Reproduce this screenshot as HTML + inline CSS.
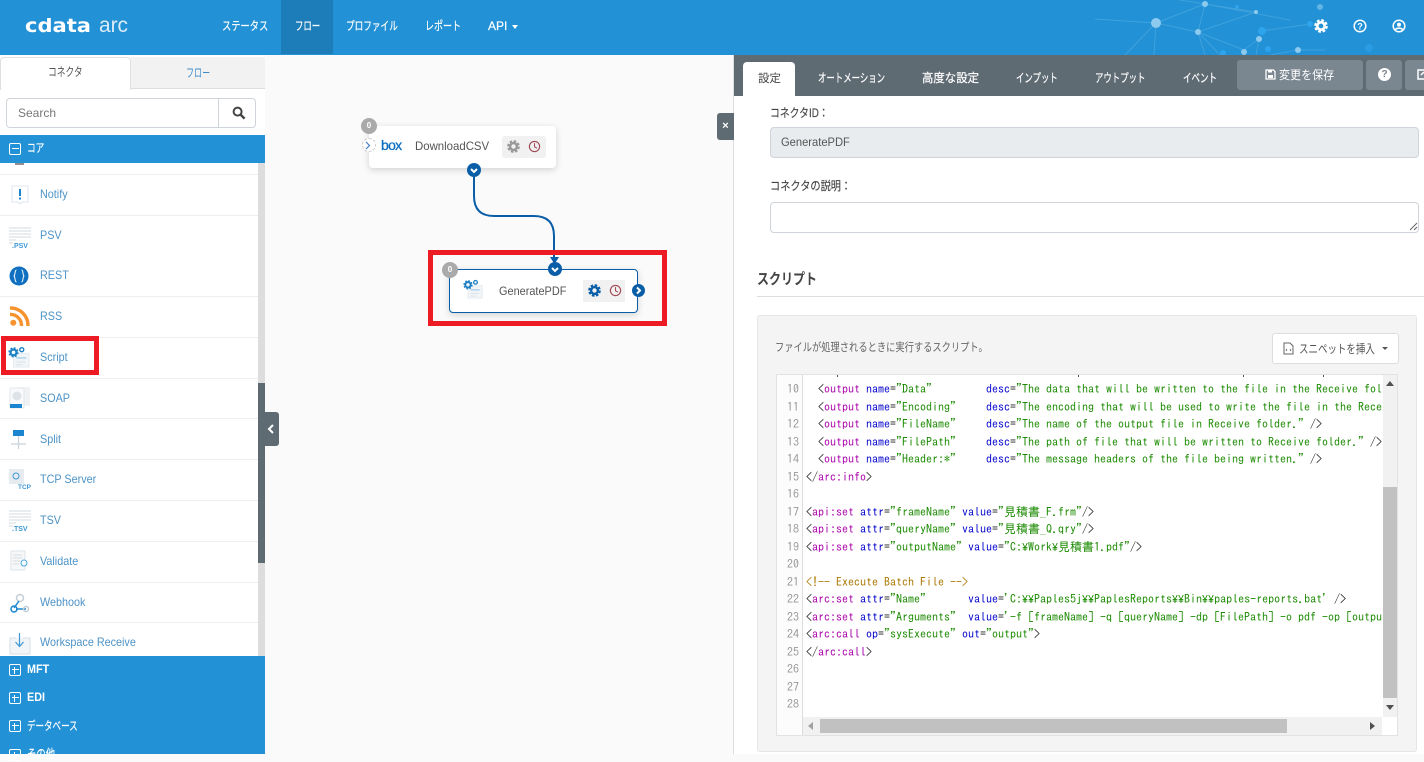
<!DOCTYPE html>
<html lang="ja"><head><meta charset="utf-8"><title>CData Arc</title>
<style>
*{box-sizing:border-box}
html,body{margin:0;padding:0;width:1424px;height:754px;overflow:hidden;background:#fafafa;font-family:"Liberation Sans","Noto Sans CJK JP",sans-serif;font-size:12px;color:#555}
.a{position:absolute}
.t{position:absolute;white-space:nowrap;line-height:16px;transform-origin:0 50%}
.nav{color:#fff;top:18px;-webkit-text-stroke:.2px #fff}
.row{position:absolute;left:0;width:258px;height:41px;border-bottom:1px solid #eee;background:#fff}
.row span{position:absolute;left:39.5px;top:11px;color:#4d93c6;font-size:12px;line-height:16px;white-space:nowrap;transform:scaleX(.9);transform-origin:0 50%}
.row svg{position:absolute;left:8px;top:5px}
.tab{color:#fff;top:70px;-webkit-text-stroke:.2px #fff}
.sec{color:#fff;left:27px;font-weight:bold}
.pm{position:absolute;left:9px;width:12px;height:12px;border:1.5px solid #fff;border-radius:2px}
.pm:before{content:"";position:absolute;left:1.5px;right:1.5px;top:3.75px;height:1.5px;background:#fff}
.pm.p:after{content:"";position:absolute;top:1.5px;bottom:1.5px;left:3.75px;width:1.5px;background:#fff}
.red{position:absolute;border:5px solid #ed1c24}
.node{position:absolute;background:#fff;border-radius:4px;box-shadow:0 2px 7px rgba(0,0,0,.16)}
.badge{position:absolute;width:16px;height:16px;border-radius:50%;background:#aaa;color:#fff;font-size:8px;line-height:16px;text-align:center;font-weight:bold}
.ib{position:absolute;background:#f1f1f1;height:22px;width:22px;top:10px}
pre{margin:0;font-family:"IPAGothic","Liberation Mono",monospace;font-size:12px;line-height:17.5px}
.k{color:#a0a}.b{color:#00c}.s{color:#1a8a00}.c{color:#a70}
.y{display:inline-block;font-family:"Liberation Mono",monospace;font-size:10px;line-height:0;transform:scaleY(1.2)}
.m{position:absolute;top:375px;width:1px;height:2px;background:#555}
</style></head><body>
<svg width="0" height="0" style="position:absolute"><defs>
<symbol id="gear" viewBox="0 0 16 16"><circle cx="8" cy="8" r="4.2" fill="none" stroke="currentColor" stroke-width="3"/><circle cx="8" cy="8" r="6.3" fill="none" stroke="currentColor" stroke-width="3" stroke-dasharray="3.1 1.85"/></symbol>
<symbol id="clock" viewBox="0 0 16 16"><circle cx="8" cy="8" r="6.3" fill="none" stroke="currentColor" stroke-width="1.4"/><path d="M8 3.8V8.4L11 10" fill="none" stroke="currentColor" stroke-width="1.3"/></symbol>
<symbol id="script" viewBox="0 0 24 24"><rect x="6" y="8" width="17" height="15" fill="#f1f5f8" stroke="#e4eaee"/><rect x="9" y="12" width="11" height="2" fill="#b9d8ec"/><rect x="9" y="17" width="10" height="1" fill="#d8e1e7"/><rect x="9" y="20" width="7" height="1" fill="#d8e1e7"/><circle cx="6" cy="7" r="3.2" fill="none" stroke="#1b7fc4" stroke-width="2.4"/><circle cx="6" cy="7" r="4.8" fill="none" stroke="#1b7fc4" stroke-width="1.6" stroke-dasharray="2 1.8"/><circle cx="15" cy="4" r="2.2" fill="none" stroke="#1b7fc4" stroke-width="1.5"/></symbol>
<symbol id="grid" viewBox="0 0 24 24"><g fill="#e9edf0"><rect x="1" y="1" width="22" height="2"/><rect x="1" y="4" width="22" height="2"/><rect x="1" y="7" width="22" height="2"/><rect x="1" y="10" width="22" height="2"/><rect x="1" y="13" width="7" height="2"/><rect x="1" y="16" width="4" height="2"/></g></symbol>
</defs></svg>

<!-- header -->
<div class="a" style="left:0;top:0;width:1424px;height:55px;background:#2291d6"></div>
<svg class="a" style="left:1090px;top:0" width="334" height="55" viewBox="1090 0 334 55">
<g stroke="#6fbce8" stroke-width="1" opacity=".38" fill="none"><path d="M1156 23L1205 4L1198 32ZM1205 4L1256 12L1198 32L1244 50M1198 32L1220 55M1198 32L1205 55M1156 23L1125 55M1156 23L1154 55M1156 23L1095 19M1205 4L1180 0M1205 4L1290 20M1262 31L1310 24M1259 39L1244 50M1259 39L1256 55M1298 50L1270 55M1298 50L1325 50"/></g>
<g fill="#8dcbee"><circle cx="1156" cy="23" r="5"/><circle cx="1205" cy="4" r="3"/><circle cx="1198" cy="32" r="3"/><circle cx="1256" cy="12" r="2"/><circle cx="1244" cy="52" r="3"/><circle cx="1259" cy="39" r="3"/><circle cx="1298" cy="50" r="3"/><circle cx="1320" cy="7" r="3" opacity=".6"/></g>
<g fill="#2ea4ec"><circle cx="1262" cy="31" r="4"/><circle cx="1268" cy="49" r="3"/><circle cx="1237" cy="7" r="2"/><circle cx="1223" cy="53" r="3"/><circle cx="1310" cy="24" r="3"/><circle cx="1369" cy="48" r="4" opacity=".6"/></g></svg>
<svg class="a" style="left:24px;top:12px" width="110" height="28"><text x="1" y="20" font-family="DejaVu Sans" font-weight="bold" font-size="19" fill="#fff" textLength="66" lengthAdjust="spacingAndGlyphs">cdata</text><text x="75" y="20" font-family="Liberation Sans" font-size="21" fill="#dcecf7" textLength="29" lengthAdjust="spacingAndGlyphs">arc</text></svg>
<div class="a" style="left:281px;top:0;width:52px;height:54px;background:#1d7db8"></div>
<div class="t nav" style="left:222px;transform:scaleX(.77)">ステータス</div>
<div class="t nav" style="left:295px;transform:scaleX(.7)">フロー</div>
<div class="t nav" style="left:346px;transform:scaleX(.72)">プロファイル</div>
<div class="t nav" style="left:425px;transform:scaleX(.75)">レポート</div>
<div class="t nav" style="left:488px">API</div>
<div class="a" style="left:512px;top:25px;border:3.5px solid transparent;border-top:4px solid #fff"></div>
<svg class="a" style="left:1314px;top:19px;color:#fff" width="14" height="14"><use href="#gear"/></svg>
<svg class="a" style="left:1353px;top:19px" width="14" height="14" viewBox="0 0 14 14"><circle cx="7" cy="7" r="5.8" fill="none" stroke="#fff" stroke-width="1.5"/><text x="7" y="10.3" text-anchor="middle" font-size="9" font-weight="bold" fill="#fff" font-family="Liberation Sans">?</text></svg>
<svg class="a" style="left:1392px;top:19px" width="14" height="14" viewBox="0 0 14 14"><circle cx="7" cy="7" r="5.8" fill="none" stroke="#fff" stroke-width="1.5"/><circle cx="7" cy="5.6" r="2" fill="#fff"/><path d="M3.4 10.8C4.4 8.6 9.6 8.6 10.6 10.8" fill="none" stroke="#fff" stroke-width="1.6"/></svg>

<!-- sidebar -->
<div class="a" style="left:0;top:55px;width:265px;height:699px;background:#fff"></div>
<div class="a" style="left:131px;top:57px;width:134px;height:32px;background:#f2f2f2;border-bottom:1px solid #ddd"></div>
<div class="a" style="left:0;top:57px;width:131px;height:33px;background:#fff;border:1px solid #e0e0e0;border-bottom:0;border-radius:4px 4px 0 0"></div>
<div class="t" style="left:48px;top:64px;color:#555;transform:scaleX(.73)">コネクタ</div>
<div class="t" style="left:186px;top:65px;color:#3f8bc9;transform:scaleX(.67)">フロー</div>
<div class="a" style="left:6px;top:98px;width:250px;height:30px;border:1px solid #ced4da;border-radius:4px;background:#fff"></div>
<div class="a" style="left:218px;top:98px;width:1px;height:30px;background:#ced4da"></div>
<div class="t" style="left:18px;top:105px;color:#777">Search</div>
<svg class="a" style="left:232px;top:106px" width="14" height="14" viewBox="0 0 14 14"><circle cx="5.6" cy="5.6" r="4" fill="none" stroke="#444" stroke-width="2"/><path d="M8.6 8.6L12.6 12.6" stroke="#444" stroke-width="2.4"/></svg>

<div class="a" style="left:0;top:163px;width:258px;height:12px;border-bottom:1px solid #eee;background:#fff"></div>
<div class="a" style="left:15px;top:163px;width:9px;height:2px;background:#444;opacity:.6"></div>

<div class="row" style="top:175px"><span>Notify</span><svg width="24" height="24" viewBox="0 0 24 24" style="top:8px"><path d="M4 3H20V19H14L12 21L10 19H4Z" fill="#fff" stroke="#dce6ee"/><rect x="11" y="6" width="2" height="7" fill="#1b86cf"/><rect x="11" y="14.5" width="2" height="2" fill="#1b86cf"/></svg></div>
<div class="row" style="top:216px"><span>PSV</span><svg width="24" height="24" viewBox="0 0 24 24" style="top:10px"><use href="#grid"/><text x="4" y="22" font-size="7" font-weight="bold" fill="#3c98d6" font-family="Liberation Sans">.PSV</text></svg></div>
<div class="row" style="top:256px"><span>REST</span><svg width="24" height="24" viewBox="0 0 24 24" style="top:8px"><circle cx="11" cy="12" r="9.5" fill="#0f6fc0"/><path d="M8.5 6C6.5 6 7.5 11 6 12C7.5 13 6.5 18 8.5 18M13.5 6C15.500 6 14.500 11 16 12C14.500 13 15.500 18 13.500 18" fill="none" stroke="#fff"/></svg></div>
<div class="row" style="top:297px"><span>RSS</span><svg width="24" height="24" viewBox="0 0 24 24" style="top:7px"><circle cx="5.300" cy="18.700" r="3" fill="#f7932e"/><path d="M2 10.500A11 11 0 0 1 13.500 22M2 4A17.500 17.500 0 0 1 20 22" fill="none" stroke="#f7932e" stroke-width="3.400"/></svg></div>
<div class="row" style="top:338px"><span>Script</span><svg width="22" height="22" viewBox="0 0 24 24" style="top:8px"><use href="#script"/></svg></div>
<div class="row" style="top:379px;height:40px"><span>SOAP</span><svg width="24" height="24" viewBox="0 0 24 24" style="top:7px"><rect x="8" y="1" width="14" height="19" fill="#f0f2f4"/><rect x="2" y="2" width="14" height="20" fill="#f8f9fa" stroke="#e3e8ec"/><circle cx="9" cy="10" r="4.500" fill="#dde3e8"/><rect x="2" y="18" width="12" height="4" fill="#1b86cf"/></svg></div>
<div class="row" style="top:419px"><span style="top:12px">Split</span><svg width="24" height="24" viewBox="0 0 24 24" style="top:10px"><rect x="5" y="1" width="11" height="6" fill="#1b86cf"/><path d="M10.500 7V20M3 15H18" stroke="#c9d2d9" stroke-width="1.200"/><circle cx="10.500" cy="15" r="1.500" fill="#d5dce1"/></svg></div>
<div class="row" style="top:460px"><span>TCP Server</span><svg width="24" height="24" viewBox="0 0 24 24" style="top:7px"><rect x="1" y="2" width="15" height="15" fill="#e6ebef"/><circle cx="8" cy="9" r="3" fill="none" stroke="#3c98d6"/><text x="10" y="22" font-size="6.500" font-weight="bold" fill="#3c98d6" font-family="Liberation Sans">TCP</text></svg></div>
<div class="row" style="top:501px"><span>TSV</span><svg width="24" height="24" viewBox="0 0 24 24" style="top:8px"><use href="#grid"/><text x="4" y="22" font-size="7" font-weight="bold" fill="#3c98d6" font-family="Liberation Sans">.TSV</text></svg></div>
<div class="row" style="top:542px"><span>Validate</span><svg width="24" height="24" viewBox="0 0 24 24" style="top:7px"><rect x="3" y="2" width="14" height="19" rx="1" fill="#f6f8f9" stroke="#dde3e8"/><path d="M5 6H14M5 9H14M5 12H12M5 15H11" stroke="#d5dbe0"/><circle cx="16" cy="14" r="3" fill="#fff" stroke="#4ba3da"/></svg></div>
<div class="row" style="top:583px;height:40px"><span>Webhook</span><svg width="24" height="24" viewBox="0 0 24 24" style="top:8px"><circle cx="12" cy="7" r="3.500" fill="none" stroke="#c3ced6" stroke-width="1.500"/><path d="M11 10L6 17" stroke="#1b86cf" stroke-width="1.500"/><circle cx="6" cy="18" r="3" fill="none" stroke="#1b86cf" stroke-width="1.500"/><path d="M8 18H18" stroke="#1b86cf" stroke-width="1.500"/><circle cx="18" cy="18" r="2.500" fill="none" stroke="#c3ced6" stroke-width="1.500"/></svg></div>
<div class="row" style="top:623px;height:33px;border:0"><span>Workspace Receive</span><svg width="24" height="24" viewBox="0 0 24 24" style="top:9px"><path d="M8 6H2V22H22V6H15" fill="#f2f5f7" stroke="#d6dee4"/><path d="M11.500 1V14M7.500 10L11.500 14.500L15.500 10" fill="none" stroke="#3c98d6" stroke-width="1.200"/></svg></div>

<div class="a" style="left:258px;top:163px;width:7px;height:493px;background:#ddd"></div>
<div class="a" style="left:258px;top:383px;width:7px;height:180px;background:#5f6b73"></div>
<div class="a" style="left:265px;top:412px;width:14px;height:34px;background:#5f6b73;border-radius:0 3px 3px 0"></div>
<svg class="a" style="left:267px;top:424px" width="9" height="10"><path d="M6 1L2 5L6 9" fill="none" stroke="#fff" stroke-width="2"/></svg>

<div class="a" style="left:0;top:135px;width:265px;height:28px;background:#2291d6"></div>
<div class="pm" style="top:143px"></div>
<div class="t sec" style="top:140px;font-weight:normal;transform:scaleX(.72);-webkit-text-stroke:.2px #fff">コア</div>
<div class="a" style="left:0;top:656px;width:265px;height:98px;background:#2291d6"></div>
<div class="pm p" style="top:664px"></div><div class="t sec" style="top:661px;transform:scaleX(.9)">MFT</div>
<div class="pm p" style="top:692px"></div><div class="t sec" style="top:689px;transform:scaleX(.9)">EDI</div>
<div class="pm p" style="top:720px"></div><div class="t sec" style="top:718px;font-weight:normal;transform:scaleX(.71);-webkit-text-stroke:.2px #fff">データベース</div>
<div class="pm p" style="top:749px"></div><div class="t sec" style="top:746px;font-weight:normal;transform:scaleX(.78);-webkit-text-stroke:.2px #fff">その他</div>
<div class="red" style="left:1px;top:336px;width:98px;height:39px"></div>

<!-- canvas -->
<svg class="a" style="left:440px;top:160px" width="140" height="110"><path d="M34 14V36Q34 56 54 56H94Q114 56 114 76V100" fill="none" stroke="#0a5ea8" stroke-width="2"/><path d="M110 97H119L114.500 104Z" fill="#0a5ea8"/></svg>
<div class="node" style="left:369px;top:126px;width:187px;height:42px">
<div class="a" style="left:-7px;top:12px;width:14px;height:14px;border-radius:50%;border:1px dashed #ccc;background:#fff"></div>
<svg class="a" style="left:-5px;top:15px" width="8" height="9"><path d="M2 1L5.500 4.500L2 8" fill="none" stroke="#3f7fc4" stroke-width="1.200"/></svg>
<div class="t" style="left:12px;top:11px;color:#0f6fc0;font-size:14px;letter-spacing:-.7px;-webkit-text-stroke:.3px #0f6fc0">box</div>
<div class="t" style="left:46px;top:12px;color:#555;font-size:12px;transform:scaleX(.95)">DownloadCSV</div>
<div class="ib" style="left:133px;border-radius:3px 0 0 3px"></div><div class="ib" style="left:155px;border-radius:0 3px 3px 0"></div>
<svg class="a" style="left:138px;top:14px;color:#999" width="13" height="13"><use href="#gear"/></svg>
<svg class="a" style="left:159px;top:14px;color:#a14a55" width="13" height="13"><use href="#clock"/></svg>
</div>
<div class="badge" style="left:361px;top:118px">0</div>
<div class="a" style="left:467px;top:163px;width:14px;height:14px;border-radius:50%;background:#0a5ea8"></div>
<svg class="a" style="left:467px;top:163px" width="14" height="14"><path d="M4 6L7 9L10 6" fill="none" stroke="#fff" stroke-width="2"/></svg>

<div class="red" style="left:428px;top:250px;width:239px;height:76px"></div>
<div class="node" style="left:449px;top:269px;width:189px;height:44px;border:1px solid #0a5ea8">
<svg class="a" style="left:13px;top:9px" width="20" height="20"><use href="#script"/></svg>
<div class="t" style="left:49px;top:13px;color:#555;font-size:12px;transform:scaleX(.91)">GeneratePDF</div>
<div class="ib" style="left:133px"></div><div class="ib" style="left:155px;width:20px"></div>
<svg class="a" style="left:138px;top:14px;color:#0a5ea8" width="13" height="13"><use href="#gear"/></svg>
<svg class="a" style="left:159px;top:14px;color:#a14a55" width="13" height="13"><use href="#clock"/></svg>
</div>
<div class="badge" style="left:442px;top:262px">0</div>
<div class="a" style="left:548px;top:262px;width:14px;height:14px;border-radius:50%;background:#0a5ea8"></div>
<svg class="a" style="left:548px;top:262px" width="14" height="14"><path d="M4 6L7 9L10 6" fill="none" stroke="#fff" stroke-width="2"/></svg>
<div class="a" style="left:632px;top:284px;width:13px;height:13px;border-radius:50%;background:#0a5ea8"></div>
<svg class="a" style="left:632px;top:284px" width="13" height="13"><path d="M5 3.500L8 6.500L5 9.500" fill="none" stroke="#fff" stroke-width="2"/></svg>

<!-- right panel -->
<div class="a" style="left:733px;top:55px;width:691px;height:699px;background:#fff;border-left:1px solid #ddd"></div>
<div class="a" style="left:717px;top:113px;width:17px;height:27px;background:#5f6b73;border-radius:3px 0 0 3px;color:#fff;font-size:11px;font-weight:bold;line-height:26px;text-align:center">×</div>
<div class="a" style="left:734px;top:55px;width:690px;height:41px;background:#5f6b73"></div>
<div class="a" style="left:743px;top:62px;width:52px;height:34px;background:#fff;border-radius:4px 4px 0 0"></div>
<div class="t" style="left:758px;top:71px;color:#444;font-size:11.500px">設定</div>
<div class="t tab" style="left:818px;transform:scaleX(.7)">オートメーション</div>
<div class="t tab" style="left:922px;transform:scaleX(.95)">高度な設定</div>
<div class="t tab" style="left:1016px;transform:scaleX(.7)">インプット</div>
<div class="t tab" style="left:1095px;transform:scaleX(.7)">アウトプット</div>
<div class="t tab" style="left:1183px;transform:scaleX(.71)">イベント</div>
<div class="a" style="left:1237px;top:60px;width:126px;height:30px;background:#7a8690;border-radius:3px"></div>
<svg class="a" style="left:1265px;top:69px" width="11" height="11" viewBox="0 0 11 11"><path d="M1 1H8.500L10 2.500V10H1Z" fill="none" stroke="#fff" stroke-width="1.300"/><rect x="3" y="6" width="5" height="3" fill="#fff"/><rect x="3" y="1.500" width="4" height="2" fill="#fff"/></svg>
<div class="t" style="left:1279px;top:67px;color:#fff;transform:scaleX(.92)">変更を保存</div>
<div class="a" style="left:1366px;top:60px;width:36px;height:30px;background:#7a8690;border-radius:3px"></div>
<div class="a" style="left:1378px;top:68px;width:13px;height:13px;border-radius:50%;background:#fff;color:#7a8690;font-size:10px;font-weight:bold;line-height:13px;text-align:center">?</div>
<div class="a" style="left:1405px;top:60px;width:19px;height:30px;background:#7a8690;border-radius:3px 0 0 3px"></div>
<svg class="a" style="left:1417px;top:68px" width="7" height="12"><path d="M7 2H1V11H7" fill="none" stroke="#fff" stroke-width="1.500"/><path d="M4 7L7 4" stroke="#fff" stroke-width="1.500"/></svg>

<div class="t" style="left:770px;top:105px;color:#444;transform:scaleX(.82);-webkit-text-stroke:.15px #444">コネクタID：</div>
<div class="a" style="left:770px;top:127px;width:649px;height:31px;background:#e9ecef;border:1px solid #ced4da;border-radius:4px"></div>
<div class="t" style="left:781px;top:134px;color:#555;transform:scaleX(.93)">GeneratePDF</div>
<div class="t" style="left:770px;top:178px;color:#444;transform:scaleX(.85);-webkit-text-stroke:.15px #444">コネクタの説明：</div>
<div class="a" style="left:770px;top:202px;width:649px;height:31px;background:#fff;border:1px solid #ced4da;border-radius:4px"></div>
<svg class="a" style="left:1409px;top:222px" width="9" height="9"><path d="M8 1L1 8M8 5L5 8" stroke="#666" stroke-width="1"/></svg>
<div class="t" style="left:757px;top:271px;color:#444;font-size:15px;line-height:18px;font-weight:bold;transform:scaleX(.8)">スクリプト</div>
<div class="a" style="left:757px;top:296px;width:667px;height:1px;background:#ddd"></div>

<div class="a" style="left:757px;top:315px;width:660px;height:437px;background:#f4f4f4;border:1px solid #e6e6e6;border-radius:3px"></div>
<div class="t" style="left:775px;top:340px;color:#666;font-size:11.500px;transform:scaleX(.805)">ファイルが処理されるときに実行するスクリプト。</div>
<div class="a" style="left:1272px;top:333px;width:127px;height:31px;background:#fff;border:1px solid #ddd;border-radius:3px"></div>
<svg class="a" style="left:1283px;top:342px" width="11" height="13" viewBox="0 0 11 13"><path d="M1 1H7L10 4V12H1Z" fill="none" stroke="#666"/><path d="M4 7L3 8L4 9M7 7L8 8L7 9" fill="none" stroke="#666" stroke-width=".8"/></svg>
<div class="t" style="left:1299px;top:341px;color:#555;transform:scaleX(.79)">スニペットを挿入</div>
<div class="a" style="left:1382px;top:347px;border:3px solid transparent;border-top:3.500px solid #555"></div>

<div class="a" style="left:776px;top:374px;width:622px;height:362px;background:#fff;border:1px solid #e2e2e2;overflow:hidden"></div>
<div class="a" style="left:777px;top:375px;width:26px;height:360px;background:#fcfcfc;border-right:1px solid #ddd"></div>
<pre class="a" style="left:777px;top:381px;width:22px;text-align:right;color:#999">10
11
12
13
14
15
16
17
18
19
20
21
22
23
24
25
26
27
28</pre>
<i class="m" style="left:837px"></i><i class="m" style="left:1078px"></i><i class="m" style="left:1243px"></i><i class="m" style="left:1323px"></i>
<div class="a" style="left:806px;top:375px;width:576px;height:342px;overflow:hidden">
<pre class="a" style="left:0;top:6px;color:#222">  &lt;<span class="k">output</span> <span class="b">name</span>=<span class="s">"Data"</span>         <span class="b">desc</span>=<span class="s">"The data that will be written to the file in the Receive folder."</span> /&gt;
  &lt;<span class="k">output</span> <span class="b">name</span>=<span class="s">"Encoding"</span>     <span class="b">desc</span>=<span class="s">"The encoding that will be used to write the file in the Receive folder."</span> /&gt;
  &lt;<span class="k">output</span> <span class="b">name</span>=<span class="s">"FileName"</span>     <span class="b">desc</span>=<span class="s">"The name of the output file in Receive folder."</span> /&gt;
  &lt;<span class="k">output</span> <span class="b">name</span>=<span class="s">"FilePath"</span>     <span class="b">desc</span>=<span class="s">"The path of file that will be written to Receive folder."</span> /&gt;
  &lt;<span class="k">output</span> <span class="b">name</span>=<span class="s">"Header:*"</span>     <span class="b">desc</span>=<span class="s">"The message headers of the file being written."</span> /&gt;
&lt;/<span class="k">arc:info</span>&gt;

&lt;<span class="k">api:set</span> <span class="b">attr</span>=<span class="s">"frameName"</span> <span class="b">value</span>=<span class="s">"見積書_F.frm"</span>/&gt;
&lt;<span class="k">api:set</span> <span class="b">attr</span>=<span class="s">"queryName"</span> <span class="b">value</span>=<span class="s">"見積書_Q.qry"</span>/&gt;
&lt;<span class="k">api:set</span> <span class="b">attr</span>=<span class="s">"outputName"</span> <span class="b">value</span>=<span class="s">"C:<span class="y">¥</span>Work<span class="y">¥</span>見積書1.pdf"</span>/&gt;

<span class="c">&lt;!-- Execute Batch File --&gt;</span>
&lt;<span class="k">arc:set</span> <span class="b">attr</span>=<span class="s">"Name"</span>       <span class="b">value</span>=<span class="s">'C:<span class="y">¥¥</span>Paples5j<span class="y">¥¥</span>PaplesReports<span class="y">¥¥</span>Bin<span class="y">¥¥</span>paples-reports.bat'</span> /&gt;
&lt;<span class="k">arc:set</span> <span class="b">attr</span>=<span class="s">"Arguments"</span>  <span class="b">value</span>=<span class="s">'-f [frameName] -q [queryName] -dp [FilePath] -o pdf -op [outputName]'</span> /&gt;
&lt;<span class="k">arc:call</span> <span class="b">op</span>=<span class="s">"sysExecute"</span> <span class="b">out</span>=<span class="s">"output"</span>&gt;
&lt;/<span class="k">arc:call</span>&gt;</pre>
</div>
<div class="a" style="left:1383px;top:375px;width:14px;height:342px;background:#f1f1f1"></div>
<div class="a" style="left:1383px;top:487px;width:14px;height:211px;background:#c1c1c1"></div>
<div class="a" style="left:1386px;top:381px;border:4px solid transparent;border-top:0;border-bottom:5px solid #505050"></div>
<div class="a" style="left:1386px;top:705px;border:4px solid transparent;border-bottom:0;border-top:5px solid #505050"></div>
<div class="a" style="left:803px;top:717px;width:579px;height:18px;background:#f1f1f1"></div>
<div class="a" style="left:820px;top:719px;width:467px;height:14px;background:#c1c1c1"></div>
<div class="a" style="left:808px;top:722px;border:4px solid transparent;border-left:0;border-right:5px solid #a3a3a3"></div>
<div class="a" style="left:1370px;top:722px;border:4px solid transparent;border-right:0;border-left:5px solid #505050"></div>
</body></html>
